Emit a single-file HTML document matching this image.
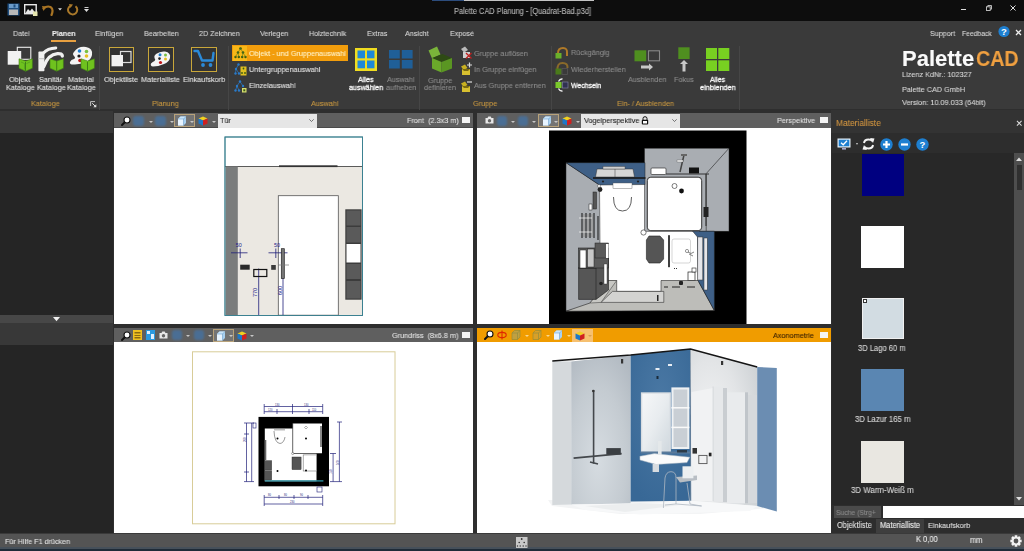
<!DOCTYPE html>
<html><head><meta charset="utf-8">
<style>
*{margin:0;padding:0;box-sizing:border-box}
html,body{width:1024px;height:551px;overflow:hidden;background:#2e2e2e;font-family:"Liberation Sans",sans-serif}
.a{position:absolute}
.t{position:absolute;white-space:nowrap;line-height:1;will-change:transform;transform:scaleX(0.909);transform-origin:0 0;-webkit-text-stroke:0.1px currentColor}
#title{left:0;top:0;width:1024px;height:21px;background:#0d0d0d}
#ribbon{left:0;top:21px;width:1024px;height:88px;background:#3a3a3a}
.tab{color:#d8d8d8;font-size:7.92px;top:30px}
.rl{color:#e2e2e2;font-size:8.03px}
.gl{color:#c69640;font-size:8.03px}
.dis{color:#8c8c8c}
.sep{position:absolute;top:46px;width:1px;height:64px;background:#464646}
.vt{position:absolute;height:15px;background:#5f5f5f}
.vw{position:absolute;background:#fff}
.vlabel{color:#e0e0e0;font-size:8.03px}
.wrect{position:absolute;width:8px;height:6px;background:#f4f4f4}
.blob{position:absolute;width:11px;height:10px;background:#3d6b94;border-radius:2px}
.dd{position:absolute;width:0;height:0;border-left:2px solid transparent;border-right:2px solid transparent;border-top:2px solid #d0d0d0}
.pt{color:#e0e0e0;font-size:8.03px}
</style></head><body>
<!-- title bar -->
<div id="title" class="a"></div>
<div class="a" style="left:431.5px;top:0;width:32px;height:1px;background:#2c4c7c"></div><div class="a" style="left:463.5px;top:0;width:130px;height:1px;background:#c4c4c4"></div>
<div class="t" style="left:454px;top:7.97px;color:#b8b8b8;font-size:8.14px">Palette CAD Planung - [Quadrat-Bad.p3d]</div>

<!-- ribbon -->
<div id="ribbon" class="a"></div>
<div class="t tab" style="left:13px;top:29.99px">Datei</div>
<div class="t tab" style="left:52px;font-weight:bold;color:#f0f0f0;top:29.99px">Planen</div>
<div class="a" style="left:51px;top:40px;width:25px;height:2px;background:#e8a040"></div>
<div class="t tab" style="left:95px;top:29.99px">Einfügen</div>
<div class="t tab" style="left:143.5px;top:29.99px">Bearbeiten</div>
<div class="t tab" style="left:199px;top:29.99px">2D Zeichnen</div>
<div class="t tab" style="left:260px;top:29.99px">Verlegen</div>
<div class="t tab" style="left:309px;top:29.99px">Holztechnik</div>
<div class="t tab" style="left:366.5px;top:29.99px">Extras</div>
<div class="t tab" style="left:405px;top:29.99px">Ansicht</div>
<div class="t tab" style="left:449.5px;top:29.99px">Exposé</div>
<div class="t tab" style="left:930px;top:29.99px">Support</div>
<div class="t tab" style="left:962px;font-size:7.48px;top:30.32px">Feedback</div>


<!-- quick access icons -->
<svg class="a" style="left:7px;top:3px" width="13" height="13" viewBox="0 0 13 13">
 <rect x="0.5" y="0.5" width="12" height="12" fill="#1f4f80"/>
 <rect x="2" y="1" width="9" height="4" fill="#6a9ac8"/>
 <rect x="6.5" y="1.5" width="2" height="3" fill="#1f4f80"/>
 <rect x="2" y="6.5" width="9" height="5.5" fill="#b8b8b8"/>
</svg>
<svg class="a" style="left:24px;top:4px" width="14" height="12" viewBox="0 0 14 12">
 <rect x="0.7" y="0.7" width="11.5" height="9" fill="none" stroke="#e8e8e8" stroke-width="1.4"/>
 <path d="M1.5 9 L4 5 L6 7 L8 4.5 L11.5 9 Z" fill="#e8e8e8"/>
 <rect x="9" y="7.5" width="4.5" height="4.5" fill="#e6e6b0"/>
</svg>
<svg class="a" style="left:42px;top:5px" width="13" height="11" viewBox="0 0 13 11">
 <path d="M1.5 3.5 Q5 0.5 8.5 2 Q12 4 9.5 10" fill="none" stroke="#a87424" stroke-width="2.2" stroke-linecap="round"/>
 <path d="M0 1 L4.5 1.5 L1.5 6 Z" fill="#a87424"/>
</svg>
<svg class="a" style="left:58px;top:8px" width="4" height="3" viewBox="0 0 4 3"><path d="M0 0.3 H4 L2 2.6 Z" fill="#d8d8d8"/></svg>
<svg class="a" style="left:67px;top:4px" width="12" height="12" viewBox="0 0 12 12">
 <path d="M8.5 2.2 A4.6 4.6 0 1 1 3.8 1.6" fill="none" stroke="#a8782a" stroke-width="2"/>
 <path d="M2 0 L6 0.5 L3.5 4 Z" fill="#a8782a"/>
</svg>
<svg class="a" style="left:84px;top:7px" width="5" height="5" viewBox="0 0 5 5">
 <rect x="0.5" y="0" width="4" height="1" fill="#ccc"/><path d="M0 2 L5 2 L2.5 5 Z" fill="#ddd"/>
</svg>
<!-- window controls -->
<div class="a" style="left:961px;top:9px;width:5px;height:1px;background:#ddd"></div>
<svg class="a" style="left:986px;top:5px" width="6" height="6" viewBox="0 0 6 6">
 <rect x="0.5" y="1.8" width="3.7" height="3.7" fill="none" stroke="#ccc" stroke-width="0.9"/>
 <path d="M1.8 1.8 V0.5 H5.5 V4.2 H4.2" fill="none" stroke="#ccc" stroke-width="0.9"/>
</svg>
<svg class="a" style="left:1010px;top:5px" width="6" height="6" viewBox="0 0 6 6">
 <path d="M0.5 0.5 L5.5 5.5 M5.5 0.5 L0.5 5.5" stroke="#ddd" stroke-width="1"/>
</svg>
<!-- help + close on tab row -->
<svg class="a" style="left:998px;top:25px" width="12" height="13" viewBox="0 0 12 13">
 <circle cx="6" cy="6.5" r="5.6" fill="#1e7fd0"/>
 <text x="6" y="10.3" font-size="9.5" font-weight="bold" fill="#fff" text-anchor="middle" font-family="Liberation Sans">?</text>
</svg>
<svg class="a" style="left:1015px;top:29px" width="7" height="7" viewBox="0 0 7 7">
 <path d="M1 1 L6 6 M6 1 L1 6" stroke="#eee" stroke-width="1.3"/>
</svg>

<!-- separators -->
<div class="sep" style="left:99px"></div>
<div class="sep" style="left:228px"></div>
<div class="sep" style="left:419px"></div>
<div class="sep" style="left:551px"></div>
<div class="sep" style="left:739px"></div>

<!-- Kataloge group -->
<svg class="a" style="left:7px;top:46px" width="26" height="27" viewBox="0 0 26 27">
 <rect x="10.3" y="1.3" width="13.5" height="12" fill="none" stroke="#eee" stroke-width="1.1"/>
 <rect x="0.7" y="5" width="13.5" height="13.7" fill="#f2f2f2"/>
 <path d="M12 12.8 L18.7 15 L25.4 12.8 L25.4 22.2 L18.7 25.2 L12 22.2 Z" fill="#6fc21e" stroke="#3f7a16" stroke-width="0.6"/>
 <path d="M18.5 16 V25.5" stroke="#3f7f17" stroke-width="1"/>
 <path d="M14 16 L17.5 17.5 V23.5 M23 16 L19.5 17.5" stroke="#4f9a1f" stroke-width="0.7" fill="none"/>
</svg>
<svg class="a" style="left:38px;top:46px" width="26" height="27" viewBox="0 0 26 27">
 <rect x="0.4" y="5.6" width="6" height="19.6" rx="0.8" fill="#f0f0f0"/>
 <rect x="0.4" y="12.3" width="6" height="0.9" fill="#b8b8b8"/>
 <path d="M5.5 7 Q9.5 2.2 17.8 1.9" fill="none" stroke="#f0f0f0" stroke-width="3" stroke-linecap="round"/>
 <path d="M5.8 20.5 Q10 8.5 19.5 7.6 Q24.3 7.4 24.3 10" fill="none" stroke="#f0f0f0" stroke-width="3.4" stroke-linecap="round"/>
 <path d="M12 12.8 L18.7 15 L25.4 12.8 L25.4 22.2 L18.7 25.2 L12 22.2 Z" fill="#6fc21e" stroke="#3f7a16" stroke-width="0.6"/>
 <path d="M18.7 15 V25.2" stroke="#3f7f17" stroke-width="1"/>
</svg>
<svg class="a" style="left:69px;top:46px" width="26" height="27" viewBox="0 0 26 27">
 <path d="M5 6 Q9 0 17 1 Q24 2 23 9 Q22 14 17 16 Q12 18 6 18.5 Q0 19 1 16 Q2 13.5 5 13 Q7 12 5 10 Q3 8 5 6 Z" fill="#f4f4f4"/>
 <circle cx="10.5" cy="5" r="1.8" fill="#1e7fd0"/>
 <circle cx="17.5" cy="5.5" r="1.8" fill="#7ac040"/>
 <circle cx="10" cy="10" r="1.6" fill="#222"/>
 <circle cx="17.5" cy="10" r="1.8" fill="#e8c020"/>
 <circle cx="11" cy="14.5" r="1.8" fill="#c01818"/>
 <path d="M12 12.8 L18.7 15 L25.4 12.8 L25.4 22.2 L18.7 25.2 L12 22.2 Z" fill="#6fc21e" stroke="#3f7a16" stroke-width="0.6"/>
 <path d="M18.5 16 V25.5" stroke="#3f7f17" stroke-width="1"/>
</svg>
<div class="t rl" style="left:8.5px;top:75.98px">Objekt</div>
<div class="t rl" style="left:6px;top:83.98px">Kataloge</div>
<div class="t rl" style="left:39px;top:75.98px">Sanitär</div>
<div class="t rl" style="left:37px;top:83.98px">Kataloge</div>
<div class="t rl" style="left:68px;top:75.98px">Material</div>
<div class="t rl" style="left:67px;top:83.98px">Kataloge</div>
<div class="t gl" style="left:31px;top:100.28px">Kataloge</div>
<svg class="a" style="left:90px;top:100.5px" width="7" height="7" viewBox="0 0 7 7"><path d="M0.6 5 V0.6 H5" fill="none" stroke="#d0d0d0" stroke-width="0.9"/><path d="M2.2 2.2 L5 5" stroke="#e0e0e0" stroke-width="1"/><path d="M6.3 6.3 L6.3 3.3 L3.3 6.3 Z" fill="#e0e0e0"/></svg>

<!-- Planung group -->
<div class="a" style="left:108.5px;top:46.5px;width:25.5px;height:25.5px;border:1.6px solid #c9a73a;background:#333"></div>
<svg class="a" style="left:111px;top:50px" width="21" height="17" viewBox="0 0 21 17">
 <rect x="9.5" y="1.5" width="10.5" height="11" fill="none" stroke="#ddd" stroke-width="1.2"/>
 <rect x="0.5" y="5" width="11.5" height="11.3" fill="#f2f2f2"/>
</svg>
<div class="a" style="left:148px;top:46.5px;width:25.5px;height:25.5px;border:1.6px solid #c9a73a;background:#333"></div>
<svg class="a" style="left:150px;top:51px" width="21" height="16" viewBox="0 0 21 16">
 <path d="M6 3 Q10 0 15 0.5 Q21 1.5 20 7 Q19 11 14 13 Q8 15.5 3 15.5 Q0 15 1 12.5 Q2 11 4.5 10 Q6 9 4.5 7 Q3.5 5 6 3 Z" fill="#f4f4f4"/>
 <circle cx="10" cy="3.8" r="1.5" fill="#1e7fd0"/>
 <circle cx="15.5" cy="4" r="1.5" fill="#7ac040"/>
 <circle cx="9.5" cy="7.6" r="1.3" fill="#222"/>
 <circle cx="15.5" cy="8" r="1.5" fill="#e8c020"/>
 <circle cx="10.5" cy="11.5" r="1.6" fill="#c01818"/>
</svg>
<div class="a" style="left:191px;top:46.5px;width:25.5px;height:25.5px;border:1.6px solid #c9a73a;background:#333"></div>
<svg class="a" style="left:193px;top:49px" width="22" height="19" viewBox="0 0 22 19">
 <path d="M1.5 2 L5 2 L9 11.5 L19.5 11.5 L20.5 4" fill="none" stroke="#2b8ad8" stroke-width="2.4" stroke-linejoin="round" stroke-linecap="round"/>
 <circle cx="10" cy="16" r="1.9" fill="#2b8ad8"/>
 <circle cx="17.5" cy="16" r="1.9" fill="#2b8ad8"/>
</svg>
<div class="t rl" style="left:104px;top:75.98px">Objektliste</div>
<div class="t rl" style="left:141px;top:75.98px">Materialliste</div>
<div class="t rl" style="left:183px;top:75.98px">Einkaufskorb</div>
<div class="t gl" style="left:151.5px;top:100.28px">Planung</div>

<!-- Auswahl group -->
<div class="a" style="left:232px;top:45px;width:116px;height:16px;background:#f29d0c"></div>
<div class="a" style="left:232.5px;top:45.5px;width:14px;height:15px;background:#f8b818"></div>
<svg class="a" style="left:234px;top:47px" width="13" height="12" viewBox="0 0 13 12">
 <g fill="#3a5a10"><circle cx="6.5" cy="1.5" r="1.3"/><circle cx="4" cy="5.5" r="1.3"/><circle cx="9" cy="5.5" r="1.3"/>
 <circle cx="1.5" cy="10" r="1.2"/><circle cx="4.8" cy="10" r="1.2"/><circle cx="8.2" cy="10" r="1.2"/><circle cx="11.5" cy="10" r="1.2"/></g>
 <path d="M6.5 1.5 L4 5.5 L1.5 10 M4 5.5 L4.8 10 M6.5 1.5 L9 5.5 L8.2 10 M9 5.5 L11.5 10" stroke="#5a7a20" stroke-width="0.6" fill="none"/>
</svg>
<div class="t rl" style="left:248.5px;top:49.98px;color:#fff2c8">Objekt - und Gruppenauswahl</div>
<svg class="a" style="left:234px;top:63px" width="13" height="13" viewBox="0 0 13 13">
 <g fill="#2a7ac8"><circle cx="4.5" cy="1.5" r="1.2"/><circle cx="2" cy="6" r="1.2"/><circle cx="1.5" cy="10.5" r="1.2"/><circle cx="5" cy="10.5" r="1.2"/></g>
 <path d="M4.5 1.5 L2 6 L1.5 10.5 M2 6 L5 10.5" stroke="#2a7ac8" stroke-width="0.7" fill="none"/>
 <rect x="6.5" y="3.5" width="6" height="9" fill="#e0c020"/>
 <g fill="#3a5a10"><circle cx="9.5" cy="5.5" r="0.9"/><circle cx="8" cy="10" r="0.9"/><circle cx="11" cy="10" r="0.9"/></g>
</svg>
<div class="t rl" style="left:248.5px;top:65.98px">Untergruppenauswahl</div>
<svg class="a" style="left:234px;top:80px" width="13" height="13" viewBox="0 0 13 13">
 <g fill="#2a7ac8"><circle cx="6" cy="1.5" r="1.2"/><circle cx="3" cy="6" r="1.2"/><circle cx="9" cy="6" r="1.2"/><circle cx="1.5" cy="10.5" r="1.2"/><circle cx="5" cy="10.5" r="1.2"/></g>
 <path d="M6 1.5 L3 6 L1.5 10.5 M3 6 L5 10.5 M6 1.5 L9 6" stroke="#2a7ac8" stroke-width="0.7" fill="none"/>
 <rect x="8" y="8" width="4.5" height="4.5" fill="#d8e070"/><rect x="9.3" y="9.3" width="2" height="2" fill="#3a5a10"/>
</svg>
<div class="t rl" style="left:248.5px;top:81.98px">Einzelauswahl</div>
<svg class="a" style="left:354.5px;top:48px" width="22" height="23" viewBox="0 0 22 23">
 <rect x="0" y="0" width="22" height="23" fill="#f0dc20"/>
 <rect x="2.5" y="2.5" width="7.5" height="7.8" fill="#1e88d8"/><rect x="12" y="2.5" width="7.5" height="7.8" fill="#1e88d8"/>
 <rect x="2.5" y="12.5" width="7.5" height="7.8" fill="#1e88d8"/><rect x="12" y="12.5" width="7.5" height="7.8" fill="#1e88d8"/>
</svg>
<div class="t rl" style="left:358px;top:75.6px;color:#fafafa;font-size:7.9px;-webkit-text-stroke:0.3px #fafafa">Alles</div>
<div class="t rl" style="left:348.5px;top:83.6px;color:#fafafa;font-size:7.87px;-webkit-text-stroke:0.3px #fafafa">auswählen</div>
<svg class="a" style="left:388.5px;top:50px" width="24" height="19" viewBox="0 0 24 19">
 <rect x="0" y="0" width="10.8" height="8.5" fill="#1f5f98"/><rect x="12.8" y="0" width="10.8" height="8.5" fill="#1f5f98"/>
 <rect x="0" y="10" width="10.8" height="8.5" fill="#1f5f98"/><rect x="12.8" y="10" width="10.8" height="8.5" fill="#1f5f98"/>
</svg>
<div class="t rl dis" style="left:387px;top:75.98px">Auswahl</div>
<div class="t rl dis" style="left:386px;top:83.98px">aufheben</div>
<div class="t gl" style="left:311px;top:100.28px">Auswahl</div>

<!-- Gruppe group -->
<svg class="a" style="left:427px;top:46px" width="26" height="27" viewBox="0 0 26 27">
 <path d="M1.5 4.5 L10 0.5 L13.5 8.5 L5 12.5 Z" fill="#7ab43a"/>
 <path d="M5 12 L15.5 8 L25 12 L14.5 16 Z" fill="#2e4a14"/>
 <path d="M5 12 L14.5 16 L14.5 26.5 L5 22.5 Z" fill="#6aa82a"/>
 <path d="M14.5 16 L25 12 L25 22.5 L14.5 26.5 Z" fill="#5a9622"/>
</svg>
<div class="t rl dis" style="left:427.5px;top:76.98px">Gruppe</div>
<div class="t rl dis" style="left:424px;top:84.48px">definieren</div>
<svg class="a" style="left:459.5px;top:46px" width="13" height="14" viewBox="0 0 13 14">
 <path d="M1 3 L5 0.5 L8 4 L4 6.5 Z" fill="#bbb"/><path d="M3 6 L10 6 L10 12 L3 12 Z" fill="#d0d0d0"/>
 <path d="M6 7 L11.5 12.5 M11.5 7 L6 12.5" stroke="#c02020" stroke-width="1.3"/>
</svg>
<svg class="a" style="left:459.5px;top:62px" width="13" height="14" viewBox="0 0 13 14">
 <path d="M1 4.5 L5 2.5 L7.5 6 L3.5 8 Z" fill="#c8b020"/><path d="M2 7 L10 7 L10 13 L2 13 Z" fill="#d8c030"/><path d="M2 7 L10 7 L8 9 L4 9 Z" fill="#7a6a10"/>
 <path d="M9.5 0.5 V5.5 M7 3 H12" stroke="#ddd" stroke-width="1.2"/>
</svg>
<svg class="a" style="left:459.5px;top:79px" width="13" height="14" viewBox="0 0 13 14">
 <path d="M1 4.5 L5 2.5 L7.5 6 L3.5 8 Z" fill="#c8b020"/><path d="M2 7 L10 7 L10 13 L2 13 Z" fill="#d8c030"/><path d="M2 7 L10 7 L8 9 L4 9 Z" fill="#7a6a10"/>
 <path d="M7 3 H12" stroke="#ddd" stroke-width="1.2"/>
</svg>
<div class="t rl dis" style="left:473.5px;top:50.48px">Gruppe auflösen</div>
<div class="t rl dis" style="left:473.5px;top:65.98px">In Gruppe einfügen</div>
<div class="t rl dis" style="left:473.5px;top:81.98px">Aus Gruppe entfernen</div>
<div class="t gl" style="left:473px;top:100.28px">Gruppe</div>

<!-- Ein-/Ausblenden group -->
<svg class="a" style="left:555px;top:47px" width="14" height="12" viewBox="0 0 14 12">
 <path d="M3 6 Q3 1 8 1 Q12.5 1 12 6 V9" fill="none" stroke="#b07a28" stroke-width="2"/>
 <rect x="0.5" y="6" width="6" height="5.5" fill="#6ab02a"/>
</svg>
<svg class="a" style="left:555px;top:62px" width="14" height="13" viewBox="0 0 14 13">
 <path d="M2.5 8 Q2 1 7.5 1 Q13 1 12.5 6" fill="none" stroke="#8a6a2a" stroke-width="2"/>
 <rect x="0.5" y="6.5" width="6" height="6" fill="#4a7a1a"/><rect x="7" y="6.5" width="5.5" height="6" fill="none" stroke="#555" stroke-width="0.8"/>
</svg>
<svg class="a" style="left:555px;top:78px" width="14" height="14" viewBox="0 0 14 14">
 <rect x="0.5" y="4" width="6" height="6" fill="#7ac82a"/>
 <rect x="7.5" y="4" width="5.5" height="6" fill="#303050" stroke="#8888aa" stroke-width="0.6"/>
 <path d="M3.5 3.5 Q5 0.5 7.5 1 M3.5 10.5 Q5 13.5 7.5 13" fill="none" stroke="#f0f0f0" stroke-width="1.4"/>
</svg>
<div class="t rl dis" style="left:570.5px;top:49.48px">Rückgängig</div>
<div class="t rl dis" style="left:570.5px;top:65.98px">Wiederherstellen</div>
<div class="t rl" style="left:570.5px;top:81.6px;color:#fafafa;font-size:7.62px;-webkit-text-stroke:0.3px #fafafa">Wechseln</div>
<svg class="a" style="left:634px;top:50px" width="27" height="21" viewBox="0 0 27 21">
 <rect x="0.5" y="0.3" width="11.7" height="11" fill="#4f8f1f"/>
 <rect x="14.5" y="0.8" width="11" height="10" fill="none" stroke="#888" stroke-width="1.1"/>
 <path d="M7 15.5 H15 V13.5 L19 17 L15 20.5 V18.5 H7 Z" fill="#c8c8c8"/>
</svg>
<div class="t rl dis" style="left:628px;top:75.98px">Ausblenden</div>
<svg class="a" style="left:677.5px;top:46.5px" width="12" height="25" viewBox="0 0 12 25">
 <rect x="0.3" y="0.3" width="11.3" height="11.7" fill="#4f8f1f"/>
 <path d="M6 13 L10 17 H7.5 V24.5 H4.5 V17 H2 Z" fill="#c8c8c8"/>
</svg>
<div class="t rl dis" style="left:674px;top:75.98px">Fokus</div>
<svg class="a" style="left:706px;top:47.5px" width="23.5" height="23.5" viewBox="0 0 23.5 23.5">
 <rect x="0" y="0" width="11" height="11" fill="#78d021"/><rect x="12.3" y="0" width="11" height="11" fill="#78d021"/>
 <rect x="0" y="12.3" width="11" height="11" fill="#78d021"/><rect x="12.3" y="12.3" width="11" height="11" fill="#78d021"/>
</svg>
<div class="t rl" style="left:710px;top:75.6px;color:#fafafa;font-size:7.61px;-webkit-text-stroke:0.3px #fafafa">Alles</div>
<div class="t rl" style="left:700px;top:83.98px;color:#fafafa;-webkit-text-stroke:0.3px #fafafa">einblenden</div>
<div class="t gl" style="left:616.5px;top:100.28px">Ein- / Ausblenden</div>

<!-- logo -->
<div class="t" style="left:901.5px;top:47.5px;font-size:22px;font-weight:bold;color:#fafafa;transform:none">Palette</div>
<div class="t" style="left:975.5px;top:47.5px;font-size:22px;font-weight:bold;color:#f0a040;transform:scaleX(0.893);transform-origin:left">CAD</div>
<div class="t rl" style="left:902px;top:70.98px;color:#d8d8d8">Lizenz KdNr.: 102327</div>
<div class="t rl" style="left:902px;top:85.98px;color:#d8d8d8">Palette CAD GmbH</div>
<div class="t rl" style="left:902px;top:99.48px;color:#d8d8d8">Version: 10.09.033 (64bit)</div>

<!-- left panel -->
<div class="a" style="left:0;top:111px;width:113px;height:22px;background:#383838"></div>
<div class="a" style="left:0;top:133px;width:113px;height:182px;background:#252525"></div>
<div class="a" style="left:0;top:315px;width:113px;height:8px;background:#474747"></div>
<svg class="a" style="left:52.5px;top:317px" width="7" height="4.5" viewBox="0 0 7 4.5"><path d="M0 0 H7 L3.5 4.2 Z" fill="#f0f0f0"/></svg>
<div class="a" style="left:0;top:323px;width:113px;height:22px;background:#383838"></div>
<div class="a" style="left:0;top:345px;width:113px;height:188px;background:#252525"></div>

<!-- viewports -->
<div class="vt" style="left:114px;top:113px;width:359px"></div>
<div class="vw" style="left:114px;top:128px;width:359px;height:196px"></div>
<div class="a" style="left:114px;top:127px;width:359px;height:1px;background:#4a4a4a"></div><div class="a" style="left:477px;top:127px;width:354px;height:1px;background:#4a4a4a"></div>
<div class="vt" style="left:477px;top:113px;width:354px"></div>
<div class="vw" style="left:477px;top:128px;width:354px;height:196px"></div>
<div class="vt" style="left:114px;top:328px;width:359px;height:14px"></div>
<div class="vw" style="left:114px;top:342px;width:359px;height:191px"></div>
<div class="vt" style="left:477px;top:328px;width:354px;height:14px;background:#f09c00"></div>
<div class="vw" style="left:477px;top:342px;width:354px;height:191px"></div>



<svg class="a" style="left:114px;top:128px" width="359" height="196" viewBox="114 128 359 196">
 <rect x="225" y="137" width="137.5" height="178.5" fill="#fff" stroke="#3a8090" stroke-width="0.9"/>
 <rect x="225.5" y="166.5" width="136.5" height="148.5" fill="#ebe8e2"/>
 <line x1="225" y1="166.5" x2="362" y2="166.5" stroke="#333" stroke-width="0.8"/>
 <rect x="279" y="165.3" width="58.5" height="1.8" fill="#333"/>
 <rect x="225.5" y="166.5" width="12.3" height="148.5" fill="#7a7c7c"/>
 <rect x="278.3" y="195.7" width="60" height="119.5" fill="#fff" stroke="#555" stroke-width="0.8"/>
 <rect x="345.3" y="209.3" width="16.3" height="90.4" fill="#3c3c3c"/>
 <rect x="346.5" y="210.5" width="14" height="15" fill="#5a5a5a"/>
 <rect x="346.5" y="227" width="14" height="15.5" fill="#5a5a5a"/>
 <rect x="346.5" y="244" width="14" height="18.5" fill="#fff"/>
 <rect x="346.5" y="264" width="14" height="15" fill="#5a5a5a"/>
 <rect x="346.5" y="281" width="14" height="17.5" fill="#5a5a5a"/>
 <rect x="225" y="137" width="137.5" height="178.5" fill="none" stroke="#3a8090" stroke-width="0.9"/>
 <g stroke="#1e1e78" stroke-width="0.8" fill="none">
  <line x1="231" y1="252.8" x2="247.5" y2="252.8"/><line x1="240.2" y1="248.5" x2="240.2" y2="258"/>
  <line x1="268.5" y1="252.8" x2="287.5" y2="252.8"/><line x1="275.8" y1="248.5" x2="275.8" y2="258"/>
  <line x1="258.7" y1="268.5" x2="258.7" y2="315"/>
  <line x1="283" y1="249" x2="283" y2="315"/>
 </g>
 <g font-family="Liberation Sans" font-size="5.4" fill="#20208a">
  <text x="235.8" y="247">50</text><text x="274" y="247">50</text>
  <text transform="translate(257.2,297) rotate(-90)">770</text>
  <text transform="translate(282,295) rotate(-90)">600</text>
 </g>
 <rect x="240.2" y="264.7" width="9.5" height="5" fill="#2a2a2a"/>
 <rect x="253.8" y="269.5" width="13" height="7" fill="none" stroke="#111" stroke-width="1.2"/>
 <rect x="271.2" y="265" width="4.6" height="4.8" fill="#3a3a3a"/>
 <rect x="281.3" y="248.7" width="3" height="29.8" fill="#777" stroke="#222" stroke-width="0.7"/>
 <line x1="278" y1="265" x2="289" y2="265" stroke="#777" stroke-width="0.7"/>
</svg>


<svg class="a" style="left:477px;top:128px" width="354" height="196" viewBox="477 128 354 196">
 <rect x="549" y="130.5" width="197.5" height="194" fill="#000"/>
 <rect x="599" y="184" width="100" height="120" fill="#fff"/>
 <path d="M566 162.7 L599.5 185 L600.5 303 L566 311.2 Z" fill="#a9adb2" stroke="#222" stroke-width="0.5"/>
 <path d="M566 311.2 L714.4 310.6 L698 280.5 L661 280.5 L661 291.4 L616.7 291.4 L616.7 280.5 L608.5 280.5 L590 303 Z" fill="#bdbdb9" stroke="#222" stroke-width="0.6"/>
 <path d="M601 302.4 L612.5 291.4 L663.8 291.4 L663.8 302.4 Z" fill="#d3d3d1" stroke="#333" stroke-width="0.6"/>
 <path d="M590 303 L608.5 280.5 L616.7 280.5 L601 302.4 Z" fill="#c8c8c4" stroke="#333" stroke-width="0.5"/>
 <rect x="644.5" y="148.2" width="84.5" height="83" fill="#a9adb2" stroke="#222" stroke-width="0.5"/>
 <path d="M729 148.2 L706.2 173.6 L706.2 231" fill="none" stroke="#222" stroke-width="0.6"/>
 <rect x="647.3" y="177.2" width="54.4" height="53.5" rx="3.5" fill="#fff" stroke="#333" stroke-width="1"/>
 <path d="M566 162.7 L645 162.7 L645 184.5 L599.5 185 Z" fill="#3e5f86" stroke="#222" stroke-width="0.5"/>
 <path d="M597 169 L633 169 L634.5 177 L595.5 177 Z" fill="#d6d6d6" stroke="#333" stroke-width="0.5"/>
 <line x1="615" y1="169" x2="615" y2="177" stroke="#555" stroke-width="0.6"/>
 <rect x="603" y="166.5" width="22" height="2.5" fill="#cfcfcf" stroke="#444" stroke-width="0.4"/>
 <rect x="593" y="177.2" width="52.5" height="1.6" fill="#1a1a1a"/>
 <circle cx="603" cy="181.5" r="1.1" fill="#222"/><circle cx="638" cy="181.5" r="1.1" fill="#222"/>
 <path d="M692.6 231.2 L714.4 231.2 L714.4 310.6 L698 280.5 L697.5 237 Z" fill="#3e5f86" stroke="#222" stroke-width="0.5"/>
 <rect x="697.8" y="237" width="5" height="43" fill="#e6e6ea" stroke="#333" stroke-width="0.5"/>
 <rect x="704" y="238" width="3.3" height="52" fill="#e6e6ea" stroke="#333" stroke-width="0.5"/>
 <!-- cabinet left -->
 <path d="M578.6 268 L596 268 L608.5 258 L608.5 290 L596 299.4 L578.6 299.4 Z" fill="#565656" stroke="#222" stroke-width="0.6"/>
 <path d="M578.6 268 L596 268 L608.5 258 L592 258 Z" fill="#4a4a4a" stroke="#222" stroke-width="0.5"/>
 <line x1="596" y1="268" x2="596" y2="299.4" stroke="#222" stroke-width="0.6"/>
 <rect x="578.6" y="248" width="29.9" height="20" fill="#5c5c5c" stroke="#222" stroke-width="0.6"/>
 <rect x="580" y="250" width="6" height="18" fill="#fff" stroke="#222" stroke-width="0.5"/>
 <rect x="587.5" y="249" width="6.5" height="18" fill="#c8c8c8" stroke="#222" stroke-width="0.5"/>
 <rect x="595" y="243" width="13.5" height="15" fill="#5a5a5a" stroke="#222" stroke-width="0.5"/>
 <rect x="606" y="244" width="2.5" height="14" fill="#fff"/>
 <rect x="604" y="264" width="3" height="20" fill="#fff" stroke="#333" stroke-width="0.4"/>
 <circle cx="601" cy="283.5" r="1.8" fill="#222"/>
 <!-- towel rack left -->
 <g stroke="#111" stroke-width="1"><line x1="582" y1="213" x2="582" y2="238"/><line x1="586" y1="213" x2="586" y2="238"/><line x1="590" y1="213" x2="590" y2="238"/><line x1="594" y1="213" x2="594" y2="238"/><line x1="598" y1="216" x2="598" y2="240"/></g>
 <g stroke="#9a9a9a" stroke-width="1.6"><line x1="584" y1="214" x2="584" y2="237"/><line x1="588" y1="214" x2="588" y2="237"/><line x1="592" y1="214" x2="592" y2="237"/></g>
 <line x1="579" y1="218" x2="592" y2="218" stroke="#eee" stroke-width="0.8"/>
 <line x1="579" y1="232" x2="592" y2="232" stroke="#eee" stroke-width="0.8"/>
 <rect x="593" y="192" width="3.5" height="17" fill="#555" stroke="#222" stroke-width="0.5"/>
 <rect x="589" y="204" width="3" height="6" fill="#fff" stroke="#222" stroke-width="0.5"/>
 <circle cx="600" cy="189.5" r="2.4" fill="#222"/><circle cx="599" cy="186" r="1.5" fill="#fff" stroke="#222" stroke-width="0.4"/>
 <!-- toilet -->
 <rect x="613" y="183" width="19" height="5.5" fill="#fff" stroke="#555" stroke-width="0.4"/>
 <path d="M613.5 197 Q613.5 211 622.5 211 Q631.5 211 631.5 197" fill="none" stroke="#333" stroke-width="0.8"/>
 <!-- shower fixtures -->
 <rect x="651" y="168" width="15" height="6.5" rx="1" fill="#fff" stroke="#333" stroke-width="0.7"/>
 <path d="M684 155 L680 172" stroke="#444" stroke-width="1.5"/>
 <rect x="681" y="154" width="6" height="2" fill="#666"/>
 <rect x="677" y="160" width="6" height="2" fill="#eee" stroke="#444" stroke-width="0.3"/>
 <rect x="689" y="167.5" width="10" height="6" fill="#111"/>
 <line x1="666" y1="174" x2="709" y2="174" stroke="#333" stroke-width="1.1"/>
 <line x1="706" y1="174" x2="706" y2="226" stroke="#333" stroke-width="1.1"/>
 <rect x="703.5" y="207" width="5" height="10" fill="#222"/>
 <circle cx="674.5" cy="186" r="2.5" fill="#fff" stroke="#444" stroke-width="0.7"/>
 <circle cx="681.5" cy="191" r="2.4" fill="#111"/>
 <circle cx="643.5" cy="232.5" r="2.6" fill="#fff" stroke="#444" stroke-width="0.7"/>
 <!-- chair -->
 <path d="M649 236 L660 236 L663.6 240 L663.6 259 L660 263 L649 263 L646.4 259 L646.4 240 Z" fill="#555" stroke="#222" stroke-width="0.6"/>
 <rect x="668.2" y="235.2" width="1.6" height="32" fill="#111"/>
 <rect x="672" y="239" width="18.5" height="24" rx="2" fill="#fff" stroke="#bbb" stroke-width="0.6"/>
 <circle cx="687" cy="251" r="1.6" fill="#fff" stroke="#333" stroke-width="0.5"/>
 <path d="M688 252 Q691 255 694 252 M689 254 L693 256" fill="none" stroke="#333" stroke-width="0.6"/>
 <rect x="674" y="268" width="1" height="1" fill="#333"/><rect x="676" y="268" width="1" height="1" fill="#333"/>
 <rect x="688" y="272" width="7" height="8.5" fill="#fff" stroke="#222" stroke-width="0.7"/>
 <rect x="692" y="268" width="4" height="4" fill="#fff" stroke="#222" stroke-width="0.6"/>
 <rect x="679" y="281" width="4" height="4" rx="1" fill="#222"/>
 <g stroke="#222" stroke-width="1"><line x1="664" y1="287" x2="668" y2="287"/><line x1="672" y1="287" x2="680" y2="287"/><line x1="687" y1="287" x2="695" y2="287"/></g>
 <rect x="657" y="295" width="1.5" height="6" fill="#222"/>
</svg>


<svg class="a" style="left:114px;top:342px" width="359" height="191" viewBox="114 342 359 191">
 <rect x="192.5" y="351.8" width="202.5" height="172" fill="none" stroke="#d8cc98" stroke-width="1"/>
 <rect x="258.5" y="416.9" width="70.5" height="69.4" fill="#000"/>
 <path d="M264.8 428.4 L292.7 428.4 L292.7 423.5 L322 423.5 L322 453.5 L316.5 453.5 L316.5 481.2 L264.8 481.2 Z" fill="#fff"/>
 <rect x="264.8" y="480.2" width="58.6" height="1.4" fill="#2a8a9a"/>
 <path d="M292.7 423.5 V453.5 H322" fill="none" stroke="#222" stroke-width="0.7"/>
 <rect x="303.2" y="454.9" width="13.3" height="16.1" fill="#fff" stroke="#777" stroke-width="0.6"/>
 <rect x="292" y="457" width="9.1" height="12.6" fill="#555" stroke="#222" stroke-width="0.4"/>
 <rect x="264.8" y="460.5" width="7" height="9.5" fill="#555" stroke="#333" stroke-width="0.3"/>
 <rect x="264.8" y="470.5" width="7" height="9.5" fill="#555" stroke="#333" stroke-width="0.3"/>
 <path d="M274 431 Q274.5 443 280 443.5 Q284 443 285 437" fill="none" stroke="#333" stroke-width="0.5"/>
 <rect x="274" y="429" width="11" height="1.5" fill="#bbb"/>
 <circle cx="277.5" cy="438.5" r="1" fill="#000"/><circle cx="306" cy="438.5" r="1" fill="#000"/><circle cx="277.5" cy="471" r="1" fill="#000"/><circle cx="306" cy="470.5" r="1" fill="#000"/>
 <circle cx="292.7" cy="453.5" r="1.1" fill="#fff" stroke="#333" stroke-width="0.4"/>
 <rect x="320" y="426" width="2" height="21" fill="#888"/>
 <path d="M306 426 L307.5 427.5 L306 429 L304.5 427.5 Z" fill="none" stroke="#444" stroke-width="0.4"/>
 <rect x="264.8" y="440" width="1.5" height="20" fill="#666"/>
 <g stroke="#1e1e78" stroke-width="0.7" fill="none">
  <line x1="264.2" y1="406.5" x2="322.7" y2="406.5"/><line x1="264.2" y1="411.7" x2="322.7" y2="411.7"/>
  <line x1="264.2" y1="404" x2="264.2" y2="414"/><line x1="322.7" y1="404" x2="322.7" y2="414"/><line x1="292.5" y1="404" x2="292.5" y2="414"/><line x1="277" y1="409" x2="277" y2="414"/><line x1="309" y1="409" x2="309" y2="414"/>
  <line x1="264.2" y1="497.3" x2="322.7" y2="497.3"/><line x1="264.2" y1="504" x2="322.7" y2="504"/>
  <line x1="264.2" y1="495" x2="264.2" y2="506"/><line x1="322.7" y1="495" x2="322.7" y2="506"/><line x1="279" y1="495" x2="279" y2="499"/><line x1="294" y1="495" x2="294" y2="499"/><line x1="308" y1="495" x2="308" y2="499"/>
  <line x1="246.5" y1="423" x2="246.5" y2="481.6"/><line x1="251.7" y1="423" x2="251.7" y2="481.6"/>
  <line x1="244" y1="423" x2="254" y2="423"/><line x1="244" y1="481.6" x2="254" y2="481.6"/><line x1="244" y1="434" x2="249" y2="434"/><line x1="244" y1="472" x2="249" y2="472"/>
  <line x1="339.4" y1="422" x2="339.4" y2="481.6"/><line x1="333.1" y1="453.5" x2="333.1" y2="481.6"/>
  <line x1="337" y1="422" x2="342" y2="422"/><line x1="330" y1="481.6" x2="342" y2="481.6"/><line x1="330" y1="453.5" x2="336" y2="453.5"/>
 </g>
 <g fill="#1e1e78" font-family="Liberation Sans" font-size="2.6">
  <text x="275" y="405.5">130</text><text x="304" y="405.5">130</text><text x="268" y="410.5">120</text><text x="312" y="410.5">110</text>
  <text x="290" y="503">230</text><text x="268" y="496">80</text><text x="284" y="496">80</text><text x="300" y="496">90</text>
  <text transform="translate(245.5,442) rotate(-90)">260</text><text transform="translate(338.5,465) rotate(-90)">340</text><text transform="translate(332,474) rotate(-90)">150</text>
 </g>
 <rect x="317" y="487" width="5" height="5" fill="none" stroke="#1e1e78" stroke-width="0.6"/>
 <rect x="253" y="423" width="3" height="5" fill="none" stroke="#1e1e78" stroke-width="0.6"/>
</svg>

<svg class="a" style="left:477px;top:342px" width="354" height="191" viewBox="477 342 354 191">
 <defs>
  <radialGradient id="gl" cx="0.45" cy="0.7" r="0.8"><stop offset="0" stop-color="#d6dce1"/><stop offset="0.6" stop-color="#c4cbd1"/><stop offset="1" stop-color="#b2bac2"/></radialGradient>
  <radialGradient id="gr" cx="0.3" cy="0.55" r="0.8"><stop offset="0" stop-color="#f4f5f6"/><stop offset="0.6" stop-color="#e2e4e6"/><stop offset="1" stop-color="#cfd3d6"/></radialGradient>
  <linearGradient id="gm" x1="0" y1="0" x2="1" y2="1"><stop offset="0" stop-color="#f6f7f8"/><stop offset="0.5" stop-color="#e8ecef"/><stop offset="1" stop-color="#d0d8de"/></linearGradient>
  <radialGradient id="gb" cx="0.5" cy="0.35" r="0.7"><stop offset="0" stop-color="#4a78a4"/><stop offset="1" stop-color="#386896"/></radialGradient>
 </defs>
 <path d="M548 500 L552 506 L620 514 L700 514 L770 508 L757 500 Z" fill="#f3f4f5"/>
 <path d="M552.3 361 L571.2 361.5 L571.2 504.4 L552.3 505 Z" fill="#d5d9dc"/>
 <path d="M571.2 361.5 L630.6 355 L630.6 503.5 L571.2 504.4 Z" fill="url(#gl)"/>
 <path d="M630.6 355 L690.5 349 L691.6 500.8 L630.6 501.5 Z" fill="url(#gb)"/>
 <path d="M690.5 349 L757.2 367 L757.2 506 L691.6 500.8 Z" fill="url(#gr)"/>
 <path d="M757.2 367 L776.8 368 L776.8 511.5 L757.2 506 Z" fill="#6b8db2"/>
 <path d="M552.3 361 L630.6 355 L690.5 349 L757.2 367" fill="none" stroke="#151515" stroke-width="1.7"/>
 <line x1="690.5" y1="350" x2="690.5" y2="501" stroke="#7a8a98" stroke-width="0.6"/>
 <path d="M571.2 504.4 L630.6 503.5 L691.6 500.8 L757.2 506 L750 511 L640 514.5 L585 510 Z" fill="#f7f8f9"/>
 <path d="M585 506 L640 503 L680 505 L625 512 Z" fill="#eceeef"/>
 <!-- right wall door shapes -->
 <path d="M691.5 392 L713 388 L713 501.5 L691.6 500.8 Z" fill="#f1f2f3"/>
 <rect x="713.1" y="386.6" width="10.5" height="115" fill="#e6e8ea"/>
 <rect x="723" y="388" width="4" height="114" fill="#c9cdd1"/>
 <line x1="713.1" y1="386.6" x2="713.1" y2="501" stroke="#d0d4d8" stroke-width="0.8"/>
 <rect x="727" y="392.3" width="18" height="111" fill="#e9ebed"/>
 <rect x="745" y="392.3" width="3" height="111" fill="#c0c5ca"/>
 <rect x="748" y="395" width="9" height="108" fill="#d6d9dc"/>
 <!-- mirror and shelf -->
 <rect x="640.9" y="392.3" width="30" height="60.4" fill="#d8dde2"/>
 <rect x="642.3" y="393.7" width="27.2" height="57.6" fill="url(#gm)"/>
 <rect x="640.9" y="451.5" width="50" height="2" fill="#5a7a9a"/>
 <rect x="671.4" y="387.4" width="18" height="61.6" fill="#eef1f3"/>
 <rect x="673.5" y="389.5" width="13.8" height="57.5" fill="#c9cfd5"/>
 <line x1="671.4" y1="407.8" x2="689.4" y2="407.8" stroke="#fafafa" stroke-width="1.5"/>
 <line x1="671.4" y1="427.4" x2="689.4" y2="427.4" stroke="#fafafa" stroke-width="1.5"/>
 <!-- sink -->
 <path d="M639.9 456.3 L654.4 453.6 L689.8 457.2 L687 462.6 L656.2 464.5 L640 460 Z" fill="#fbfbfb" stroke="#a8b4c0" stroke-width="0.5"/>
 <rect x="652.6" y="464" width="6.4" height="8" fill="#d8dce0"/>
 <rect x="658" y="441" width="3.6" height="14" fill="#e4e8ea"/>
 <rect x="677" y="450" width="10" height="2.5" fill="#2a3a48"/>
 <!-- grab bars -->
 <line x1="593.6" y1="390" x2="593.6" y2="463.6" stroke="#44484c" stroke-width="1.6"/>
 <circle cx="593.3" cy="391" r="1.3" fill="#333"/>
 <line x1="573.6" y1="458.1" x2="621.7" y2="453.6" stroke="#44484c" stroke-width="1.6"/>
 <line x1="590" y1="462" x2="598" y2="464" stroke="#44484c" stroke-width="1.6"/>
 <rect x="606.3" y="448.1" width="14.5" height="6.5" fill="#3a3e42"/>
 <!-- chair -->
 <path d="M663.4 508 L665 478 Q666 471.7 671 471.7 Q676 471.7 676 478 L676 504 M665 505 L676 504 L701.6 506 M687 483 L690 504 L701.6 506" fill="none" stroke="#aeb8c2" stroke-width="0.8"/>
 <path d="M676 477 L697 475.4 L697 480 L680 482.6 Z" fill="#b8bec4"/>
 <rect x="682.5" y="466.3" width="10.9" height="12" fill="#eceff1"/>
 <!-- small fixtures -->
 <rect x="621" y="359" width="2.2" height="4.5" fill="#333"/>
 <rect x="721" y="361" width="2.2" height="4" fill="#333"/>
 <rect x="655.5" y="368" width="4" height="2" fill="#e8eef4"/><rect x="668" y="364" width="4" height="2" fill="#e8eef4"/>
 <rect x="656.5" y="376" width="2" height="3" fill="#1a2a3a"/>
 <rect x="692.5" y="448" width="4.5" height="5.6" fill="#333"/>
 <rect x="698.8" y="455.4" width="8.2" height="8.2" fill="none" stroke="#555" stroke-width="0.9"/>
 <rect x="708.8" y="452.7" width="2.7" height="3.6" fill="#222"/>
</svg>

<!-- viewport toolbars content -->
<svg class="a" style="left:120.5px;top:115.5px" width="10" height="10" viewBox="0 0 10 10"><path d="M4 6 L1 9" stroke="#111" stroke-width="2" stroke-linecap="round"/><circle cx="6" cy="4" r="3" fill="#fff" stroke="#111" stroke-width="1.1"/></svg><div class="a" style="left:133px;top:116px;width:11px;height:10px;background:#48709a;border-radius:3px;filter:blur(0.8px);opacity:0.9"></div><div class="dd" style="left:148.5px;top:120.5px;border-top-color:#c8c8c8"></div><div class="a" style="left:155px;top:116px;width:11px;height:10px;background:#48709a;border-radius:3px;filter:blur(0.8px);opacity:0.9"></div><div class="dd" style="left:170px;top:120.5px;border-top-color:#c8c8c8"></div><div class="a" style="left:174px;top:114px;width:21px;height:13px;border:1px solid #b8a27a;background:#747474"></div><svg class="a" style="left:177px;top:116px" width="10" height="10" viewBox="0 0 10 10"><path d="M1 3 L3.5 0.5 H9 V7 L6.5 9.5 H1 Z" fill="#a8d0f0"/><path d="M1 3 H6.5 V9.5 H1 Z" fill="#e8f4ff"/><path d="M1 3 L3.5 0.5 H9 L6.5 3 Z" fill="#c8e4fa"/><path d="M1 3 H6.5 V9.5 M6.5 3 L9 0.5" stroke="#5a90c0" stroke-width="0.5" fill="none"/></svg><div class="dd" style="left:190px;top:120.5px;border-top-color:#c8c8c8"></div><svg class="a" style="left:197.5px;top:116px" width="10" height="10" viewBox="0 0 10 10"><path d="M0.5 2.5 L5 0.5 L9.5 2.5 L5 4.5 Z" fill="#f0d020"/><path d="M0.5 2.5 L5 4.5 V9.5 L0.5 7.5 Z" fill="#1e78c8"/><path d="M5 4.5 L9.5 2.5 V7.5 L5 9.5 Z" fill="#d02020"/></svg><div class="dd" style="left:211.5px;top:120.5px;border-top-color:#c8c8c8"></div><div class="a" style="left:217.5px;top:113.5px;width:99px;height:14px;background:#e6e6e6"></div><div class="t" style="left:220.0px;top:116.98px;font-size:8.03px;color:#222">Tür</div><svg class="a" style="left:308.5px;top:118.5px" width="5" height="3" viewBox="0 0 5 3"><path d="M0.3 0.3 L2.5 2.5 L4.7 0.3" fill="none" stroke="#444" stroke-width="0.7"/></svg><div class="t vlabel" style="left:406.5px;top:116.98px">Front&nbsp; (2.3x3 m)</div><div class="a" style="left:462px;top:117px;width:8px;height:6px;background:#f4f4f4"></div><svg class="a" style="left:484.5px;top:116px" width="9" height="8" viewBox="0 0 9 8"><path d="M0.5 2 H2.5 L3.3 0.5 H5.7 L6.5 2 H8.5 V7.5 H0.5 Z" fill="#e8e8e8"/><circle cx="4.5" cy="4.7" r="1.7" fill="#666"/></svg><div class="a" style="left:497px;top:116px;width:10px;height:10px;background:#48709a;border-radius:3px;filter:blur(0.8px);opacity:0.9"></div><div class="dd" style="left:511px;top:120.5px;border-top-color:#c8c8c8"></div><div class="a" style="left:518px;top:116px;width:10px;height:10px;background:#48709a;border-radius:3px;filter:blur(0.8px);opacity:0.9"></div><div class="dd" style="left:532px;top:120.5px;border-top-color:#c8c8c8"></div><div class="a" style="left:538px;top:114px;width:21px;height:13px;border:1px solid #b8a27a;background:#747474"></div><svg class="a" style="left:542px;top:116px" width="10" height="10" viewBox="0 0 10 10"><path d="M1 3 L3.5 0.5 H9 V7 L6.5 9.5 H1 Z" fill="#a8d0f0"/><path d="M1 3 H6.5 V9.5 H1 Z" fill="#e8f4ff"/><path d="M1 3 L3.5 0.5 H9 L6.5 3 Z" fill="#c8e4fa"/><path d="M1 3 H6.5 V9.5 M6.5 3 L9 0.5" stroke="#5a90c0" stroke-width="0.5" fill="none"/></svg><div class="dd" style="left:554px;top:120.5px;border-top-color:#c8c8c8"></div><svg class="a" style="left:562px;top:116px" width="10" height="10" viewBox="0 0 10 10"><path d="M0.5 2.5 L5 0.5 L9.5 2.5 L5 4.5 Z" fill="#f0d020"/><path d="M0.5 2.5 L5 4.5 V9.5 L0.5 7.5 Z" fill="#1e78c8"/><path d="M5 4.5 L9.5 2.5 V7.5 L5 9.5 Z" fill="#d02020"/></svg><div class="dd" style="left:575.5px;top:120.5px;border-top-color:#c8c8c8"></div><div class="a" style="left:581px;top:113.5px;width:99px;height:14px;background:#e6e6e6"></div><div class="t" style="left:583.5px;top:116.98px;font-size:8.03px;color:#222">Vogelperspektive</div><svg class="a" style="left:641px;top:116px" width="8" height="9" viewBox="0 0 8 9"><path d="M2 4 V2.5 Q2 0.7 4 0.7 Q6 0.7 6 2.5 V4" fill="none" stroke="#111" stroke-width="1"/><rect x="0.8" y="3.8" width="6.4" height="4.8" rx="1" fill="#111"/><rect x="2" y="5" width="4" height="2.5" fill="#fff"/></svg><svg class="a" style="left:672px;top:118.5px" width="5" height="3" viewBox="0 0 5 3"><path d="M0.3 0.3 L2.5 2.5 L4.7 0.3" fill="none" stroke="#444" stroke-width="0.7"/></svg><div class="t vlabel" style="left:777px;top:117.48px">Perspektive</div><div class="a" style="left:819.5px;top:117px;width:8px;height:6px;background:#f4f4f4"></div><svg class="a" style="left:120.5px;top:330.5px" width="10" height="10" viewBox="0 0 10 10"><path d="M4 6 L1 9" stroke="#111" stroke-width="2" stroke-linecap="round"/><circle cx="6" cy="4" r="3" fill="#fff" stroke="#111" stroke-width="1.1"/></svg><svg class="a" style="left:133px;top:330px" width="9" height="10" viewBox="0 0 9 10"><rect x="0" y="0" width="9" height="10" fill="#f0c020"/><rect x="1.5" y="2" width="6" height="1.5" fill="#8a6a10"/><rect x="1.5" y="5" width="6" height="1" fill="#8a6a10"/><rect x="1.5" y="7" width="6" height="1.5" fill="#8a6a10"/></svg><svg class="a" style="left:146px;top:330px" width="9" height="10" viewBox="0 0 9 10"><rect x="0" y="0" width="9" height="10" fill="#2a9ae0"/><rect x="1" y="1" width="3" height="3" fill="#e0f0ff"/><rect x="5" y="4" width="3" height="5" fill="#e0f0ff"/></svg><svg class="a" style="left:159px;top:331px" width="9" height="8" viewBox="0 0 9 8"><path d="M0.5 2 H2.5 L3.3 0.5 H5.7 L6.5 2 H8.5 V7.5 H0.5 Z" fill="#e8e8e8"/><circle cx="4.5" cy="4.7" r="1.7" fill="#666"/></svg><div class="a" style="left:171.5px;top:330px;width:10px;height:10px;background:#48709a;border-radius:3px;filter:blur(0.8px);opacity:0.9"></div><div class="dd" style="left:186px;top:334.5px;border-top-color:#c8c8c8"></div><div class="a" style="left:193.5px;top:330px;width:10px;height:10px;background:#48709a;border-radius:3px;filter:blur(0.8px);opacity:0.9"></div><div class="dd" style="left:207.5px;top:334.5px;border-top-color:#c8c8c8"></div><div class="a" style="left:213px;top:329px;width:21px;height:13px;border:1px solid #b8a27a;background:#747474"></div><svg class="a" style="left:216px;top:330.5px" width="10" height="10" viewBox="0 0 10 10"><path d="M1 3 L3.5 0.5 H9 V7 L6.5 9.5 H1 Z" fill="#a8d0f0"/><path d="M1 3 H6.5 V9.5 H1 Z" fill="#e8f4ff"/><path d="M1 3 L3.5 0.5 H9 L6.5 3 Z" fill="#c8e4fa"/><path d="M1 3 H6.5 V9.5 M6.5 3 L9 0.5" stroke="#5a90c0" stroke-width="0.5" fill="none"/></svg><div class="dd" style="left:229px;top:334.5px;border-top-color:#c8c8c8"></div><svg class="a" style="left:236.5px;top:330.5px" width="10" height="10" viewBox="0 0 10 10"><path d="M0.5 2.5 L5 0.5 L9.5 2.5 L5 4.5 Z" fill="#f0d020"/><path d="M0.5 2.5 L5 4.5 V9.5 L0.5 7.5 Z" fill="#1e78c8"/><path d="M5 4.5 L9.5 2.5 V7.5 L5 9.5 Z" fill="#d02020"/></svg><div class="dd" style="left:250px;top:334.5px;border-top-color:#c8c8c8"></div><div class="t vlabel" style="left:392px;top:331.98px">Grundriss&nbsp; (8x6.8 m)</div><div class="a" style="left:462px;top:332px;width:8px;height:6px;background:#f4f4f4"></div><svg class="a" style="left:484px;top:330px" width="10" height="10" viewBox="0 0 10 10"><path d="M4 6 L1 9" stroke="#111" stroke-width="2" stroke-linecap="round"/><circle cx="6" cy="4" r="3" fill="#fff" stroke="#111" stroke-width="1.1"/></svg><svg class="a" style="left:497px;top:330px" width="10" height="10" viewBox="0 0 10 10"><ellipse cx="5" cy="5" rx="4.2" ry="2.6" fill="none" stroke="#e02800" stroke-width="1.1"/><path d="M5 0.5 V9.5" stroke="#e02800" stroke-width="1.1"/></svg><svg class="a" style="left:510.5px;top:330px" width="10" height="10" viewBox="0 0 10 10"><path d="M1 3 L3.5 0.5 H9 V7 L6.5 9.5 H1 Z" fill="#c0a040" stroke="#8a8a40" stroke-width="0.6"/><path d="M1 3 H6.5 V9.5 M6.5 3 L9 0.5" stroke="#8a8a40" stroke-width="0.6" fill="none"/></svg><div class="dd" style="left:524.5px;top:334.5px;border-top-color:#f8d890"></div><svg class="a" style="left:531.5px;top:330px" width="10" height="10" viewBox="0 0 10 10"><path d="M1 3 L3.5 0.5 H9 V7 L6.5 9.5 H1 Z" fill="#d8a028" stroke="#8a8a40" stroke-width="0.6"/><path d="M1 3 H6.5 V9.5 M6.5 3 L9 0.5" stroke="#8a8a40" stroke-width="0.6" fill="none"/></svg><div class="dd" style="left:545.5px;top:334.5px;border-top-color:#f8d890"></div><svg class="a" style="left:553px;top:330px" width="10" height="10" viewBox="0 0 10 10"><path d="M1 3 L3.5 0.5 H9 V7 L6.5 9.5 H1 Z" fill="#a8d0f0"/><path d="M1 3 H6.5 V9.5 H1 Z" fill="#e8f4ff"/><path d="M1 3 L3.5 0.5 H9 L6.5 3 Z" fill="#c8e4fa"/><path d="M1 3 H6.5 V9.5 M6.5 3 L9 0.5" stroke="#5a90c0" stroke-width="0.5" fill="none"/></svg><div class="dd" style="left:566.5px;top:334.5px;border-top-color:#f8d890"></div><div class="a" style="left:572px;top:329px;width:21px;height:13px;background:#f6c070"></div><svg class="a" style="left:574.5px;top:330.5px" width="10" height="10" viewBox="0 0 10 10"><path d="M0.5 2.5 L5 0.5 L9.5 2.5 L5 4.5 Z" fill="#f0d020"/><path d="M0.5 2.5 L5 4.5 V9.5 L0.5 7.5 Z" fill="#1e78c8"/><path d="M5 4.5 L9.5 2.5 V7.5 L5 9.5 Z" fill="#d02020"/></svg><div class="dd" style="left:588px;top:334.5px;border-top-color:#d8a050"></div><div class="t" style="left:773px;top:331.98px;font-size:8.03px;color:#3a2200">Axonometrie</div><div class="a" style="left:820px;top:332px;width:8px;height:6px;background:#f4f4f4"></div>
<!-- right panel -->
<div class="a" style="left:831px;top:110px;width:193px;height:423px;background:#2d2d2d"></div>
<div class="a" style="left:831px;top:110px;width:193px;height:22.5px;background:#333"></div>
<div class="t" style="left:835.5px;top:119.39px;font-size:9.24px;color:#d09440">Materialliste</div>
<svg class="a" style="left:1015.5px;top:120px" width="6.5" height="6.5" viewBox="0 0 7 7"><path d="M1 1 L6 6 M6 1 L1 6" stroke="#ddd" stroke-width="1.1"/></svg>
<svg class="a" style="left:837px;top:138px" width="14" height="12" viewBox="0 0 14 12">
 <rect x="0.5" y="0.5" width="13" height="9" fill="#e8f2fa"/><rect x="1.7" y="1.7" width="10.6" height="6.6" fill="#1e7fd0"/>
 <path d="M4 4.8 L6.2 6.8 L10 2.8" fill="none" stroke="#fff" stroke-width="1.3"/>
 <rect x="5" y="10" width="4" height="1.6" fill="#aac"/>
</svg>
<div class="dd" style="left:855.5px;top:142.5px;border-top-color:#ccc;border-left-width:1.5px;border-right-width:1.5px"></div>
<svg class="a" style="left:862px;top:138px" width="13" height="12" viewBox="0 0 13 12">
 <path d="M2 5 Q2.5 1.5 6.5 1.5 Q9 1.5 10.5 3" fill="none" stroke="#f4f4f4" stroke-width="2"/><path d="M8 0 L12.5 0.5 L11 5 Z" fill="#f4f4f4"/>
 <path d="M11 7 Q10.5 10.5 6.5 10.5 Q4 10.5 2.5 9" fill="none" stroke="#f4f4f4" stroke-width="2"/><path d="M5 12 L0.5 11.5 L2 7 Z" fill="#f4f4f4"/>
</svg>
<svg class="a" style="left:880px;top:138px" width="13" height="13" viewBox="0 0 13 13"><circle cx="6.5" cy="6.5" r="6.2" fill="#1e7fd0"/><path d="M6.5 3 V10 M3 6.5 H10" stroke="#fff" stroke-width="2.2"/></svg>
<svg class="a" style="left:897.5px;top:138px" width="13" height="13" viewBox="0 0 13 13"><circle cx="6.5" cy="6.5" r="6.2" fill="#1e7fd0"/><path d="M3 6.5 H10" stroke="#fff" stroke-width="2.2"/></svg>
<svg class="a" style="left:915.5px;top:138px" width="13" height="13" viewBox="0 0 13 13"><circle cx="6.5" cy="6.5" r="6.2" fill="#1e7fd0"/><text x="6.5" y="10.3" font-size="9.5" font-weight="bold" fill="#fff" text-anchor="middle" font-family="Liberation Sans">?</text></svg>
<div class="a" style="left:832px;top:153px;width:182px;height:352px;background:#282828"></div>
<div class="a" style="left:1014px;top:153px;width:10px;height:352px;background:#4e4e4e"></div>
<svg class="a" style="left:1016px;top:157px" width="6" height="4" viewBox="0 0 6 4"><path d="M0 4 L3 0.5 L6 4 Z" fill="#ddd"/></svg>
<div class="a" style="left:1017px;top:165px;width:5px;height:25px;background:#303030"></div>
<svg class="a" style="left:1016px;top:497px" width="6" height="4" viewBox="0 0 6 4"><path d="M0 0 L3 3.5 L6 0 Z" fill="#ddd"/></svg>
<!-- swatches -->
<div class="a" style="left:861.8px;top:154px;width:42px;height:42.3px;background:#000080"></div>
<div class="a" style="left:861px;top:225.7px;width:43px;height:42.7px;background:#fff"></div>
<div class="a" style="left:861.6px;top:297.9px;width:42px;height:41.4px;background:#d2dce2;border:1px solid #f0f0f0"></div>
<div class="a" style="left:862.5px;top:298.8px;width:4px;height:4px;border:0.8px solid #333;background:#fff"></div>
<div class="t" style="left:857.5px;top:343.96px;font-size:8.36px;color:#d8d8d8">3D Lago 60 m</div>
<div class="a" style="left:861.3px;top:369.3px;width:42.8px;height:42.1px;background:#5a86b2"></div>
<div class="t" style="left:854.8px;top:414.94px;font-size:8.58px;color:#d8d8d8">3D Lazur 165 m</div>
<div class="a" style="left:861.3px;top:441px;width:42.8px;height:42.1px;background:#e9e7e1"></div>
<div class="t" style="left:851px;top:486.23px;font-size:8.69px;color:#d8d8d8">3D Warm-Weiß m</div>
<!-- search -->
<div class="a" style="left:834px;top:505.5px;width:47px;height:12px;background:#4a4a4a"></div>
<div class="t" style="left:836px;top:508.52px;font-size:7.48px;color:#8a8a8a">Suche (Strg+</div>
<div class="a" style="left:883.3px;top:505.5px;width:141px;height:12px;background:#fff"></div>
<!-- tabs -->
<div class="a" style="left:876px;top:519px;width:48px;height:14px;background:#3e3e3e"></div>
<div class="t" style="left:837px;top:522.47px;font-size:8.20px;color:#e0e0e0">Objektliste</div>
<div class="t" style="left:880px;top:522.47px;font-size:8.25px;color:#f0f0f0">Materialliste</div>
<div class="t" style="left:928px;top:522.48px;font-size:8.03px;color:#e0e0e0">Einkaufskorb</div>

<!-- status bar -->
<div class="a" style="left:0;top:533px;width:1024px;height:14px;background:#545454"></div>
<div class="a" style="left:0;top:533px;width:1024px;height:1px;background:#3a3a3a"></div>
<div class="a" style="left:0;top:547px;width:1024px;height:2px;background:#46505a"></div>
<div class="a" style="left:0;top:549px;width:1024px;height:2px;background:#1f2b37"></div>
<div class="t" style="left:5px;top:537.99px;color:#e0e0e0;font-size:7.92px">Für Hilfe F1 drücken</div>
<svg class="a" style="left:516px;top:536.5px" width="11.5" height="11" viewBox="0 0 11.5 11"><rect x="0" y="0" width="11.5" height="11" fill="#c8c8c8"/><g fill="#333"><circle cx="5.7" cy="2" r="0.9"/><circle cx="3.2" cy="5.5" r="0.8"/><circle cx="8.2" cy="5.5" r="0.8"/><circle cx="1.5" cy="9" r="0.7"/><circle cx="4.2" cy="9" r="0.7"/><circle cx="7.2" cy="9" r="0.7"/><circle cx="10" cy="9" r="0.7"/></g></svg>
<div class="t" style="left:916px;top:536.47px;color:#e8e8e8;font-size:8.25px">K 0,00</div>
<div class="t" style="left:969.5px;top:537.27px;color:#e8e8e8;font-size:8.25px">mm</div>
<svg class="a" style="left:1009.5px;top:535px" width="12" height="12" viewBox="0 0 12 12"><path d="M11.66 4.73 L11.66 7.27 L9.93 7.48 L9.83 7.73 L10.90 9.11 L9.11 10.90 L7.73 9.83 L7.48 9.93 L7.27 11.66 L4.73 11.66 L4.52 9.93 L4.27 9.83 L2.89 10.90 L1.10 9.11 L2.17 7.73 L2.07 7.48 L0.34 7.27 L0.34 4.73 L2.07 4.52 L2.17 4.27 L1.10 2.89 L2.89 1.10 L4.27 2.17 L4.52 2.07 L4.73 0.34 L7.27 0.34 L7.48 2.07 L7.73 2.17 L9.11 1.10 L10.90 2.89 L9.83 4.27 L9.93 4.52 Z M6 3.6 A2.4 2.4 0 1 0 6 8.4 A2.4 2.4 0 1 0 6 3.6 Z" fill="#f2f2f2" fill-rule="evenodd"/></svg>
</body></html>
